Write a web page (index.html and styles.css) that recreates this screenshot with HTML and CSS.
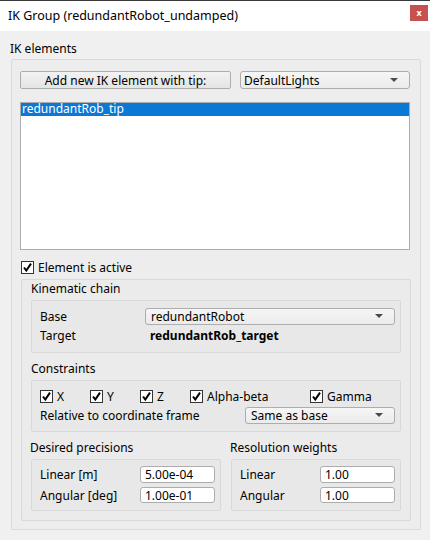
FILE: index.html
```html
<!DOCTYPE html>
<html>
<head>
<meta charset="utf-8">
<link rel="stylesheet" href="styles.css">
</head>
<body>
<div class="window">
  <div class="titlebar">
    <span class="title">IK Group (redundantRobot_undamped)</span>
    <span class="close">x</span>
  </div>
  <div class="client">
    <div class="gtitle top">IK elements</div>
    <div class="gbox outer">
      <div class="row1">
        <button class="btn">Add new IK element with tip:</button>
        <div class="combo c-lights"><span>DefaultLights</span><i class="arrow"></i></div>
      </div>
      <div class="list">
        <div class="item sel">redundantRob_tip</div>
      </div>
      <label class="chk active">
        <span class="box"><svg viewBox="0 0 11 11" width="11" height="11"><path d="M2 5.5 L4.3 8.6 L9 1.6" fill="none" stroke="#000" stroke-width="2"/></svg></span>
        <span>Element is active</span>
      </label>
      <div class="gbox elem">
        <div class="gtitle">Kinematic chain</div>
        <div class="gbox inner kin">
          <div class="frow">
            <span class="lab w105">Base</span>
            <div class="combo c-base"><span>redundantRobot</span><i class="arrow"></i></div>
          </div>
          <div class="frow">
            <span class="lab w105">Target</span>
            <span class="bold">redundantRob_target</span>
          </div>
        </div>
        <div class="gtitle">Constraints</div>
        <div class="gbox inner cons">
          <div class="chkrow">
            <label class="chk w50"><span class="box"><svg viewBox="0 0 11 11" width="11" height="11"><path d="M2 5.5 L4.3 8.6 L9 1.6" fill="none" stroke="#000" stroke-width="2"/></svg></span><span>X</span></label>
            <label class="chk w50"><span class="box"><svg viewBox="0 0 11 11" width="11" height="11"><path d="M2 5.5 L4.3 8.6 L9 1.6" fill="none" stroke="#000" stroke-width="2"/></svg></span><span>Y</span></label>
            <label class="chk w50"><span class="box"><svg viewBox="0 0 11 11" width="11" height="11"><path d="M2 5.5 L4.3 8.6 L9 1.6" fill="none" stroke="#000" stroke-width="2"/></svg></span><span>Z</span></label>
            <label class="chk w120"><span class="box"><svg viewBox="0 0 11 11" width="11" height="11"><path d="M2 5.5 L4.3 8.6 L9 1.6" fill="none" stroke="#000" stroke-width="2"/></svg></span><span>Alpha-beta</span></label>
            <label class="chk"><span class="box"><svg viewBox="0 0 11 11" width="11" height="11"><path d="M2 5.5 L4.3 8.6 L9 1.6" fill="none" stroke="#000" stroke-width="2"/></svg></span><span>Gamma</span></label>
          </div>
          <div class="frow">
            <span class="lab w205">Relative to coordinate frame</span>
            <div class="combo c-frame"><span>Same as base</span><i class="arrow"></i></div>
          </div>
        </div>
        <div class="cols">
          <div class="col left">
            <div class="gtitle">Desired precisions</div>
            <div class="gbox inner prec">
              <div class="frow"><span class="lab w100">Linear [m]</span><input class="inp" value="5.00e-04"></div>
              <div class="frow"><span class="lab w100">Angular [deg]</span><input class="inp" value="1.00e-01"></div>
            </div>
          </div>
          <div class="col right">
            <div class="gtitle">Resolution weights</div>
            <div class="gbox inner prec">
              <div class="frow"><span class="lab w80">Linear</span><input class="inp" value="1.00"></div>
              <div class="frow"><span class="lab w80">Angular</span><input class="inp" value="1.00"></div>
            </div>
          </div>
        </div>
      </div>
    </div>
  </div>
</div>
</body>
</html>
```

FILE: styles.css
```css
* { box-sizing: border-box; }
html, body { margin: 0; padding: 0; }
body {
  width: 430px; height: 540px; overflow: hidden;
  background: #f0f0f0;
  font-family: "Noto Sans", "Segoe UI", sans-serif;
  font-size: 12px; color: #000;
}
.window { width: 430px; height: 540px; display: flex; flex-direction: column; }
.titlebar {
  height: 31px; background: #fff; border-top: 1px solid #3a3a3a;
  display: flex; align-items: center; justify-content: space-between;
  padding: 0 2px 0 8px;
}
.title { font-size: 12.5px; margin-top: -1px; }
.close {
  width: 18px; height: 16px; background: #c75050; color: #fff;
  font-size: 9px; font-weight: bold; line-height: 15px; text-align: center;
  margin-top: -6px;
}
.client { padding: 9px 9px 0 11px; }
.gtitle { height: 20px; line-height: 18px; padding-left: 8px; white-space: nowrap; }
.gtitle.top { height: 19px; padding-left: 0; line-height: 17px; margin-left: -1px; }
.gbox {
  border: 1px solid #d9d9d9; border-radius: 2px;
  background: rgba(0,0,0,0.012);
}
.outer { width: 410px; height: 471px; padding: 11px 10px 8px 8px; display: flex; flex-direction: column; }
.row1 { display: flex; gap: 9px; height: 18px; }
.btn {
  width: 211px; height: 18px; margin: 0; padding: 0;
  font: inherit; color: #000;
  background: linear-gradient(#f2f2f2, #e4e4e4);
  border: 1px solid #adadad; border-radius: 2px;
}
.combo {
  height: 17px; background: linear-gradient(#f6f6f6, #ebebeb);
  border: 1px solid #adadad; border-radius: 3px;
  display: flex; align-items: center; justify-content: space-between;
  padding: 0 11px 0 5px; position: relative;
}
.combo.c-lights { width: 170px; height: 18px; padding-left: 3px; }
.arrow {
  width: 0; height: 0; border-left: 4px solid transparent; border-right: 4px solid transparent;
  border-top: 4px solid #4a4a4a;
}
.list {
  margin-top: 13px; height: 149px; width: 390px;
  background: #fff; border: 1px solid #adadad;
}
.item { height: 13px; line-height: 12px; padding-left: 1px; }
.item.sel { background: #0a78d4; color: #fff; }
.chk { display: flex; align-items: center; gap: 4px; height: 14px; }
.chk .box {
  width: 13px; height: 13px; background: #fff; border: 1px solid #333;
  display: flex; align-items: center; justify-content: center;
}
.chk.active { margin-top: 10px; margin-left: 1px; }
.elem {
  margin-top: 5px; margin-left: 1px; width: 390px; height: 243px;
  padding: 0 9px 9px 9px; background: rgba(0,0,0,0.006);
}
.elem > .gtitle { padding-left: 0; }
.inner { width: 370px; margin-bottom: 7px; padding: 0 5px 0 8px; }
.kin { height: 53px; padding-top: 7px; display: flex; flex-direction: column; gap: 3px; }
.frow { display: flex; align-items: center; height: 16px; }
.lab { white-space: nowrap; }
.w105 { width: 105px; }
.w205 { width: 205px; }
.w100 { width: 100px; }
.w80 { width: 80px; }
.c-base { width: 250px; }
.c-frame { width: 150px; }
.bold { font-weight: bold; padding-left: 5px; }
.cons { height: 52px; padding-top: 8px; display: flex; flex-direction: column; gap: 4px; }
.chkrow { display: flex; height: 14px; }
.w50 { width: 50px; }
.w120 { width: 120px; }
.cols { display: flex; gap: 10px; }
.col { display: flex; flex-direction: column; }
.col.left { width: 190px; }
.col.right { width: 170px; }
.col .gtitle { padding-left: 0; margin-left: -1px; }
.col .inner { width: auto; margin: 0; }
.prec { height: 52px; padding-top: 6px; display: flex; flex-direction: column; gap: 4px; }
.prec .frow:first-child { height: 17px; }
.inp {
  width: 75px; height: 100%; font: inherit; color: #000;
  background: #fff; border: 1px solid #adadad; border-radius: 3px;
  padding: 0 4px; margin: 0; outline: none;
}
```
